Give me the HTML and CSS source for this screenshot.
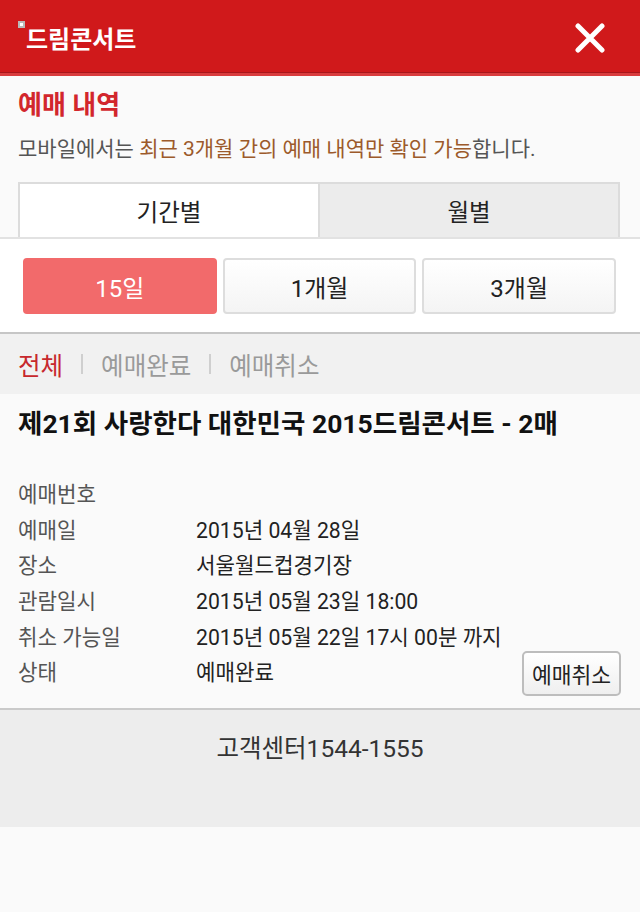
FILE: index.html
```html
<!DOCTYPE html>
<html lang="ko">
<head>
<meta charset="utf-8">
<title>드림콘서트 - 예매 내역</title>
<link rel="stylesheet" href="styles.css">
</head>
<body>
<header class="topbar">
  <div class="brand">
    <span class="brand-icon"></span>
    <span class="brand-name">드림콘서트</span>
  </div>
  <button class="close" aria-label="닫기">
    <svg width="30" height="30" viewBox="0 0 30 30" aria-hidden="true">
      <path d="M3 3 L27 27 M27 3 L3 27" stroke="#fff" stroke-width="5" stroke-linecap="round" fill="none"/>
    </svg>
  </button>
</header>
<div class="topbar-edge"></div>

<section class="intro">
  <h2 class="intro-title">예매 내역</h2>
  <p class="intro-desc">모바일에서는 <span class="hl">최근 3개월 간의 예매 내역만 확인 가능</span>합니다.</p>
</section>

<nav class="tabs">
  <div class="tab active">기간별</div>
  <div class="tab">월별</div>
</nav>

<div class="periods">
  <button class="period active">15일</button>
  <button class="period">1개월</button>
  <button class="period">3개월</button>
</div>

<div class="filters">
  <span class="filter active">전체</span>
  <span class="sep"></span>
  <span class="filter">예매완료</span>
  <span class="sep"></span>
  <span class="filter">예매취소</span>
</div>

<section class="booking">
  <h3 class="booking-title">제21회 사랑한다 대한민국 2015드림콘서트 - 2매</h3>
  <div class="rows">
    <div class="row"><span class="label">예매번호</span><span class="value"></span></div>
    <div class="row"><span class="label">예매일</span><span class="value">2015년 04월 28일</span></div>
    <div class="row"><span class="label">장소</span><span class="value">서울월드컵경기장</span></div>
    <div class="row"><span class="label">관람일시</span><span class="value">2015년 05월 23일 18:00</span></div>
    <div class="row"><span class="label">취소 가능일</span><span class="value">2015년 05월 22일 17시 00분 까지</span></div>
    <div class="row"><span class="label">상태</span><span class="value">예매완료</span><button class="cancel">예매취소</button></div>
  </div>
</section>

<footer class="footer">고객센터1544-1555</footer>
</body>
</html>
```

FILE: styles.css
```css
html, body {
  margin: 0;
  padding: 0;
}
body {
  background: #fafafa;
  font-family: "Roboto", "Noto Sans CJK KR", sans-serif;
  color: #222;
}

/* Header */
.topbar {
  height: 72px;
  background: #d0191b;
  display: flex;
  justify-content: space-between;
  align-items: flex-start;
  padding: 0 35px 0 18px;
}
.brand {
  display: flex;
  align-items: flex-start;
}
.brand-icon {
  width: 3px;
  height: 3px;
  margin-top: 21px;
  border: 2px solid #b9b9b9;
  background: #fff;
}
.brand-name {
  margin-top: 25px;
  margin-left: 1px;
  font-size: 24px;
  line-height: 30px;
  font-weight: 700;
  color: #fff;
}
.close {
  margin-top: 23px;
  width: 30px;
  height: 30px;
  padding: 0;
  border: 0;
  background: none;
  display: block;
}
.close svg {
  display: block;
}
.topbar-edge {
  height: 3px;
  border-top: 1px solid #a8161a;
  background: #d93c3e;
}

/* Intro */
.intro {
  padding: 13px 18px 0;
}
.intro-title {
  margin: 0;
  font-size: 26px;
  line-height: 32px;
  font-weight: 700;
  color: #d2262c;
}
.intro-desc {
  margin: 14px 0 0;
  font-size: 21px;
  line-height: 28px;
  color: #555;
}
.intro-desc .hl {
  color: #9c5a2b;
}

/* Tabs */
.tabs {
  display: flex;
  margin-top: 19px;
  padding: 0 20px 0 18px;
  border-bottom: 2px solid #e2e2e2;
}
.tab {
  flex: 1;
  height: 53px;
  border-top: 2px solid #dcdcdc;
  border-left: 2px solid #dcdcdc;
  display: flex;
  align-items: center;
  justify-content: center;
  font-size: 23.5px;
  color: #222;
  background: #ececec;
}
.tab:last-child {
  border-right: 2px solid #dcdcdc;
}
.tab.active {
  background: #fff;
}

/* Periods */
.periods {
  display: flex;
  gap: 6px;
  padding: 19px 24px 18px 23px;
  background: #fff;
  border-bottom: 2px solid #c6c6c6;
}
.period {
  flex: 1;
  height: 56px;
  border: 2px solid #dddddd;
  border-radius: 4px;
  background: linear-gradient(#ffffff, #f4f4f4);
  font-family: inherit;
  font-size: 24px;
  color: #222;
  padding: 0;
}
.period.active {
  background: #f26a6b;
  border-color: #f26a6b;
  color: #fff;
}

/* Filters */
.filters {
  height: 60px;
  background: #f1f1f1;
  display: flex;
  align-items: center;
  padding-left: 18px;
  font-size: 24.5px;
  color: #9a9a9a;
}
.filter.active {
  color: #c7282d;
}
.sep {
  width: 2px;
  height: 20px;
  background: #cfcfcf;
  margin: 0 18px 0 18px;
}

/* Booking */
.booking {
  padding: 14px 19px 19px 18px;
}
.booking-title {
  margin: 0;
  font-size: 26.5px;
  line-height: 32px;
  font-weight: 700;
  color: #111;
}
.rows {
  margin-top: 35px;
}
.row {
  height: 35.6px;
  display: flex;
  align-items: center;
  font-size: 21.2px;
}
.label {
  width: 178px;
  flex-shrink: 0;
  color: #555;
}
.value {
  color: #222;
}
.cancel {
  margin-left: auto;
  margin-top: 6px;
  flex-shrink: 0;
  width: 99px;
  height: 45px;
  border: 2px solid #bdbdbd;
  border-radius: 5px;
  background: linear-gradient(#ffffff, #efefef);
  font-family: inherit;
  font-size: 21.5px;
  color: #222;
  padding: 0;
}

/* Footer */
.footer {
  border-top: 2px solid #cacaca;
  background: #ededed;
  height: 92px;
  padding-top: 25px;
  text-align: center;
  font-size: 24.5px;
  line-height: 28px;
  color: #333;
}
```
